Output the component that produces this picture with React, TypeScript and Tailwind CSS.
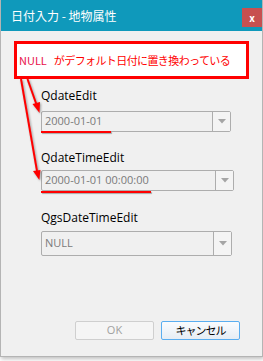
const jp = "font-['Noto_Sans_CJK_JP',sans-serif]";
const latin = "font-['Open_Sans','Noto_Sans_CJK_JP',sans-serif]";

const Combo = ({ value, w, h }: { value: string; w: string; h: string }) => (
  <div className={`ml-[40px] flex ${w} ${h} rounded-[2px] border border-[#adadad] bg-[#f0f0f0]`}>
    <div className={`flex flex-1 items-center pl-[3px] text-[11px] text-[#7a7a7a] ${latin}`}>{value}</div>
    <div className="flex w-[18px] items-center justify-center border-l border-[#adadad] bg-[#f4f4f4]">
      <svg width="8" height="5" viewBox="0 0 8 5">
        <path d="M0 0 L8 0 L4 4.5 Z" fill="#a5a5a5" />
      </svg>
    </div>
  </div>
);

const Label = ({ text, mt }: { text: string; mt: string }) => (
  <div className={`ml-[40px] ${mt} h-[16px] text-[12px] leading-[16px] text-black ${latin}`}>{text}</div>
);

export default function App() {
  return (
    <div className={`h-[361px] w-[263px] bg-white ${jp}`}>
      <div className="relative flex h-[357px] w-[263px] flex-col border-b border-r border-l border-[#b4b4b4] bg-[#f0f0f0] shadow-[1px_2px_4px_rgba(0,0,0,0.25)]">
        {/* title bar */}
        <div className="flex h-[31px] shrink-0 items-start justify-between bg-[#0f99bb]">
          <span className="mt-[7px] ml-[10px] text-[12px] leading-[18px] text-white">日付入力 - 地物属性</span>
          <div className="mt-[8px] flex h-[19px] w-[20px] items-center justify-center bg-[#c75050] text-[10px] font-bold leading-none text-white">
            x
          </div>
        </div>

        {/* annotation */}
        <div className="mt-[10px] ml-[13px] flex h-[38px] w-[235px] items-center border-[3px] border-[#ff0000] bg-white pl-[2px] text-[11px] leading-none">
          <span className="text-[#e8104a]">NULL</span>
          <span className="ml-[7px] tracking-[-0.6px] text-[#ff0000]">がデフォルト日付に置き換わっている</span>
        </div>

        <Label text="QdateEdit" mt="mt-[9px]" />
        <div className="mt-[7px]">
          <Combo value="2000-01-01" w="w-[190px]" h="h-[21px]" />
        </div>

        <Label text="QdateTimeEdit" mt="mt-[18px]" />
        <div className="mt-[4px]">
          <Combo value="2000-01-01 00:00:00" w="w-[193px]" h="h-[21px]" />
        </div>

        <Label text="QgsDateTimeEdit" mt="mt-[19px]" />
        <div className="mt-[5px]">
          <Combo value="NULL" w="w-[191px]" h="h-[25px]" />
        </div>

        {/* buttons */}
        <div className="mt-[65px] ml-[74px] flex gap-[7px]">
          <div className={`flex h-[19px] w-[79px] items-center justify-center rounded-[2px] border border-[#cfcfcf] bg-[#f5f5f5] text-[11px] text-[#a0a0a0] ${latin}`}>
            OK
          </div>
          <div className="flex h-[19px] w-[79px] items-center justify-center rounded-[2px] border border-[#5aaef0] bg-gradient-to-b from-[#fafcfe] to-[#e6edf4] text-[11px] tracking-[-1px] text-black">
            キャンセル
          </div>
        </div>

        {/* red underlines on combos */}
        <div className="absolute top-[131px] left-[40px] h-[2px] w-[70px] bg-[#ff0000] shadow-[1px_1px_1px_rgba(0,0,0,0.3)]" />
        <div className="absolute top-[191px] left-[40px] h-[2px] w-[110px] bg-[#ff0000] shadow-[1px_1px_1px_rgba(0,0,0,0.3)]" />

        {/* arrows */}
        <svg
          className="pointer-events-none absolute top-0 left-0 drop-shadow-[1px_1px_1px_rgba(0,0,0,0.35)]"
          width="263"
          height="357"
        >
          <line x1="26.5" y1="79" x2="36" y2="106" stroke="#ff0000" strokeWidth="2" />
          <path d="M31.5 104 L38.5 113 L39 102 Z" fill="#ff0000" />
          <line x1="20" y1="79" x2="36" y2="171" stroke="#ff0000" strokeWidth="2" />
          <path d="M32 171 L38.3 180 L39.5 170 Z" fill="#ff0000" />
        </svg>
      </div>
    </div>
  );
}
